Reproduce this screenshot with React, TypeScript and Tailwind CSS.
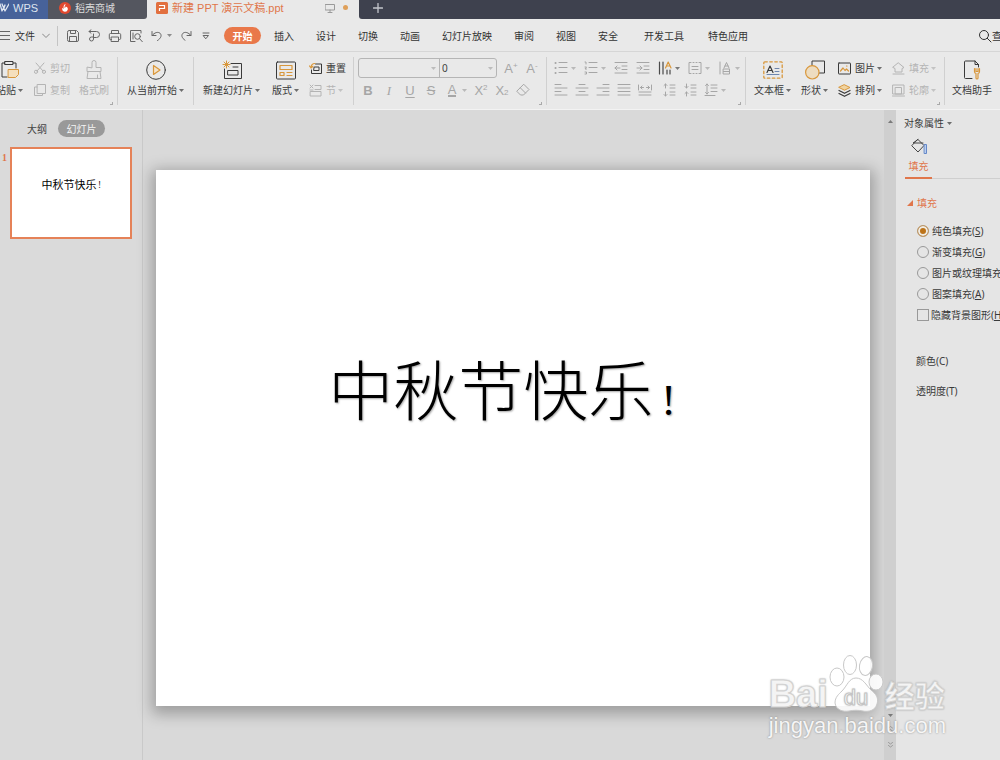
import { useState } from 'react';
import type { ReactNode } from 'react';

const MENU_TABS = ['插入', '设计', '切换', '动画', '幻灯片放映', '审阅', '视图', '安全'];
const EXTRA_TABS = ['开发工具', '特色应用'];

const FILL_OPTIONS = [
  { id: 'solid', label: '纯色填充', hotkey: 'S' },
  { id: 'gradient', label: '渐变填充', hotkey: 'G' },
  { id: 'picture', label: '图片或纹理填充', hotkey: 'P' },
  { id: 'pattern', label: '图案填充', hotkey: 'A' },
];

function Svg({ w = 14, h = 14, children }: { w?: number; h?: number; children: ReactNode }) {
  return (
    <svg
      width={w}
      height={h}
      viewBox={`0 0 ${w} ${h}`}
      fill="none"
      stroke="currentColor"
      strokeWidth="1"
      strokeLinecap="round"
      strokeLinejoin="round"
      className="shrink-0"
      aria-hidden="true"
    >
      {children}
    </svg>
  );
}

function Caret() {
  return (
    <svg width="5" height="3" viewBox="0 0 5 3" className="shrink-0 opacity-70" aria-hidden="true">
      <path d="M0 0h5L2.5 3z" fill="currentColor" />
    </svg>
  );
}

function Group({ className, corner, children }: { className: string; corner?: boolean; children: ReactNode }) {
  return (
    <div className={`relative flex shrink-0 border-r border-[#d0d0d0] ${className}`}>
      {children}
      {corner && (
        <span className="absolute right-1 bottom-0 size-[3px] border-r border-b border-[#aaa]" />
      )}
    </div>
  );
}

function BigButton({ icon, label, caret, disabled }: { icon: ReactNode; label: string; caret?: boolean; disabled?: boolean }) {
  return (
    <button
      type="button"
      disabled={disabled}
      className="flex shrink-0 flex-col items-center gap-[3px] self-start pt-[3px] text-[#3a3a3a] disabled:text-[#b4b4b4]"
    >
      {icon}
      <span className="flex items-center gap-[2px] leading-[14px]">
        {label}
        {caret && <Caret />}
      </span>
    </button>
  );
}

function RowButton({ icon, label, caret, disabled }: { icon: ReactNode; label: string; caret?: boolean; disabled?: boolean }) {
  return (
    <button
      type="button"
      disabled={disabled}
      className="flex h-[22px] items-center gap-1 text-[#3a3a3a] disabled:text-[#b4b4b4]"
    >
      {icon}
      <span className="flex items-center gap-[2px]">
        {label}
        {caret && <Caret />}
      </span>
    </button>
  );
}

function ToolButton({ name, caret, active, children }: { name: string; caret?: boolean; active?: boolean; children: ReactNode }) {
  return (
    <button
      type="button"
      aria-label={name}
      className={`flex h-[22px] items-center gap-[3px] ${active ? 'text-[#4a4a4a]' : 'text-[#a6a6a6]'}`}
    >
      <span className="flex w-[14px] justify-center text-[13px] leading-none">{children}</span>
      {caret && <Caret />}
    </button>
  );
}

// Letter with a small raised or lowered mark beside it
function MarkedLetter({ letter, mark, low }: { letter: string; mark: string; low?: boolean }) {
  return (
    <span className={`flex font-['Liberation_Sans'] ${low ? 'items-end' : 'items-start'}`}>
      {letter}
      <span className="text-[8px] leading-[8px]">{mark}</span>
    </span>
  );
}

function TitleBar() {
  return (
    <header className="flex h-[19px] overflow-hidden bg-[#e9e9e9] text-[10px]">
      <div className="flex shrink-0 overflow-hidden rounded-br-[3px]">
        <button type="button" className="flex w-12 items-center gap-1 bg-[#47629a] pb-1 text-[#dfe5f0]">
          <Svg w={9} h={9}>
            <path d="M0 1l2 7 3-6M2 1l3 7 4-7M5 2L4 5" strokeWidth="1.3" />
          </Svg>
          <span className="font-['Liberation_Sans'] text-[11px]">WPS</span>
        </button>
        <button type="button" className="flex w-[99px] items-center gap-1 bg-[#54565f] pb-1 pl-[11px] text-[#dcdcdc]">
          <svg width="12" height="12" viewBox="0 0 12 12" aria-hidden="true">
            <circle cx="6" cy="6" r="6" fill="#e2492f" />
            <path d="M6.3 1.8C7 3.5 5 4.2 5.6 6c.8-.3 1-.9 1-1.5C8.600 5 9 6.200 8.800 7.500a2.900 2.900 0 0 1-5.700-.5c0-.6.2-1 .4-1.300.3.800.8 1 1.200 1C4.100 4.500 5 3 6.300 1.800z" fill="#fff" />
          </svg>
          稻壳商城
        </button>
      </div>
      <div className="flex w-[212px] shrink-0 items-center gap-1 pb-1 pl-[9px] text-[#e0764b]">
        <svg width="12" height="12" viewBox="0 0 12 12" className="shrink-0" aria-hidden="true">
          <rect width="12" height="12" rx="1.500" fill="#e2703f" />
          <path d="M3 3.500h5.500v3H3.500v2.500" fill="none" stroke="#fff" strokeWidth="1.200" />
        </svg>
        <span className="font-['Liberation_Sans','Noto_Sans_CJK_SC',sans-serif] text-[11px] whitespace-nowrap">新建 PPT 演示文稿.ppt</span>
        <span className="ml-auto text-[#9a9a9a]">
          <Svg w={10} h={10}>
            <path d="M.5 1.500h9v5.500h-9zM5 7v2M3 9.500h4" />
          </Svg>
        </span>
        <span className="mr-[11px] ml-1 size-[5px] rounded-full bg-[#dfa05a]" />
      </div>
      <div className="flex flex-1 items-center rounded-bl-[3px] bg-[#3e414e] pb-1 pl-[14px]">
        <button type="button" aria-label="新建标签" className="text-[#c4c6cc]">
          <Svg w={10} h={10}>
            <path d="M5 .5v9M.5 5h9" strokeWidth="1.300" />
          </Svg>
        </button>
      </div>
    </header>
  );
}

function MenuBar() {
  return (
    <nav className="flex h-[33px] items-center overflow-hidden border-b border-[#d6d6d6] bg-[#e9e9e9] pt-px whitespace-nowrap text-[#333]">
      <button type="button" className="flex shrink-0 items-center gap-[5px]">
        <Svg w={10} h={9}>
          <path d="M0 .5h10M0 4.500h10M0 8.500h10" stroke="#666" />
        </Svg>
        文件
        <span className="ml-[2px] text-[#888]">
          <Svg w={8} h={6}>
            <path d="M.5 1L4 4.500 7.500 1" />
          </Svg>
        </span>
      </button>
      <span className="mr-2 ml-[7px] h-5 w-px shrink-0 bg-[#c4c4c4]" />
      <div className="flex shrink-0 items-center gap-[7px] text-[#666]">
        <button type="button" aria-label="保存">
          <Svg>
            <path d="M1.500 3a1.500 1.500 0 0 1 1.500-1.500h7.500l2 2V11a1.500 1.500 0 0 1-1.500 1.500H3A1.500 1.500 0 0 1 1.500 11zM4.500 1.500v3h5v-3M3.500 12.500v-5h7v5" />
          </Svg>
        </button>
        <button type="button" aria-label="输出为PDF">
          <Svg>
            <path d="M2 2.500h7.500a3 3 0 0 1 0 6H6.500M4 .8L2 2.500l2 1.700M6.500 5v5a2 2 0 1 1-2-2h2" />
          </Svg>
        </button>
        <button type="button" aria-label="打印">
          <Svg>
            <path d="M3.500 4.500v-3h7v3M3.500 10.500h-1a1.200 1.200 0 0 1-1.200-1.200V5.700a1.200 1.200 0 0 1 1.200-1.200h9a1.200 1.200 0 0 1 1.200 1.200v3.600a1.200 1.200 0 0 1-1.200 1.200h-1M3.500 8h7v4.500h-7z" />
          </Svg>
        </button>
        <button type="button" aria-label="打印预览">
          <Svg>
            <path d="M12 4V1.500H1.500v11H6M4 4v6" />
            <circle cx="8.500" cy="7.500" r="2.800" />
            <path d="M10.600 9.700l2.700 3" />
          </Svg>
        </button>
        <button type="button" aria-label="撤销" className="flex items-center gap-[3px]">
          <Svg>
            <path d="M2 2.500v4h4M2.200 6.300C4.500 3.500 8 2.500 10 4.200c2 1.800 1.300 5-2.500 7.300" />
          </Svg>
          <Caret />
        </button>
        <button type="button" aria-label="恢复">
          <Svg>
            <path d="M12 2.500v4H8M11.800 6.300C9.500 3.500 6 2.500 4 4.200c-2 1.800-1.300 5 2 7" />
          </Svg>
        </button>
        <button type="button" aria-label="更多" className="ml-[2px]">
          <Svg w={8} h={8}>
            <path d="M1 1h6M1.500 3.500h5L4 6.500z" />
          </Svg>
        </button>
      </div>
      <button type="button" className="mr-[13px] ml-[14px] h-[17px] w-[37px] shrink-0 rounded-full bg-[#e9784a] font-bold text-white">
        开始
      </button>
      <div className="flex shrink-0 gap-[22px]">
        {MENU_TABS.map((tab) => (
          <button type="button" key={tab}>{tab}</button>
        ))}
      </div>
      <div className="ml-[26px] flex shrink-0 gap-6">
        {EXTRA_TABS.map((tab) => (
          <button type="button" key={tab}>{tab}</button>
        ))}
      </div>
      <button type="button" className="ml-auto flex w-[22px] shrink-0 items-center overflow-hidden">
        <Svg>
          <circle cx="6" cy="6" r="4.500" />
          <path d="M9.300 9.300l3.700 3.700" />
        </Svg>
        查找
      </button>
    </nav>
  );
}

function Ribbon() {
  const amber = '#d8973c';

  return (
    <div className="flex h-[58px] overflow-hidden border-b border-[#f3f3f3] bg-[#e9e9e9] pt-[5px] pb-1 whitespace-nowrap">
      {/* Clipboard */}
      <Group className="-ml-1 pr-2" corner>
        <BigButton
          label="粘贴"
          caret
          icon={
            <Svg w={20} h={20}>
              <path d="M5 3H2v14h5M13 3h3v5M5 1.500h8v3H5z" />
              <path d="M8.500 9.500h10v5l-3 3h-7z" stroke={amber} fill="#f5dfbd" />
            </Svg>
          }
        />
        <div className="mr-[9px] ml-[11px]">
          <RowButton
            label="剪切"
            disabled
            icon={
              <Svg w={12} h={12}>
                <path d="M2 1l7 8M10 1L3 9" />
                <circle cx="2" cy="9.800" r="1.600" />
                <circle cx="10" cy="9.800" r="1.600" />
              </Svg>
            }
          />
          <RowButton
            label="复制"
            disabled
            icon={
              <Svg w={12} h={12}>
                <path d="M3.500.5h8v9h-8zM3 3H.5v8.500h8V10" />
              </Svg>
            }
          />
        </div>
        <BigButton
          label="格式刷"
          disabled
          icon={
            <Svg w={18} h={20}>
              <path d="M7 7.500v-5a2 2 0 0 1 4 0v5h5v4H2v-4zM3 11.500L2 18.500h14l-1-7M12.500 15v3.500" />
            </Svg>
          }
        />
      </Group>

      {/* Slide show */}
      <Group className="px-[9px]">
        <BigButton
          label="从当前开始"
          caret
          icon={
            <Svg w={20} h={20}>
              <circle cx="10" cy="10" r="9.300" />
              <path d="M7.500 5.500v9l6.500-4.500z" stroke={amber} fill="#f5e3c8" strokeWidth="1.200" />
            </Svg>
          }
        />
      </Group>

      {/* Slides */}
      <Group className="pr-[7px] pl-[9px]">
        <BigButton
          label="新建幻灯片"
          caret
          icon={
            <Svg w={20} h={20}>
              <path d="M9 3.500h10.500v15h-17V9M6 10.500h10v4.500H6zM11 7h5" />
              <path d="M4.500 1v7M1 4.500h7M2 2l5 5M7 2L2 7" stroke={amber} />
            </Svg>
          }
        />
        <div className="mr-[10px] ml-3 flex">
          <BigButton
            label="版式"
            caret
            icon={
              <Svg w={20} h={20}>
                <rect x=".5" y="2" width="19" height="17" rx="1" />
                <path d="M4 5.500h12v4H4zM4 12.500h4v3H4zM11 12.500h5M11 15.500h5" stroke={amber} strokeWidth="1.200" />
              </Svg>
            }
          />
        </div>
        <div>
          <RowButton
            label="重置"
            icon={
              <Svg w={13} h={13}>
                <path d="M6.500 2h6v9.500H2.500V8M5.500 5h4.500v3.500H5z" />
                <path d="M.5 4l1.500 2 2-1.700M2 6c0-3 1.500-4.500 4-4.500" stroke={amber} strokeWidth="1.200" />
              </Svg>
            }
          />
          <RowButton
            label="节"
            caret
            disabled
            icon={
              <Svg w={13} h={13}>
                <path d="M6 1.500h6v4H6M1 1l3 3M4 1L1 4M1.500 7.500h10.500v4.500H1.500zM1 6h3" />
              </Svg>
            }
          />
        </div>
      </Group>

      {/* Font */}
      <Group className="flex-col pr-[7px] pl-1" corner>
        <div className="flex h-[22px] items-center gap-[7px]">
          <div className="flex h-5 rounded-[3px] border border-[#b5b5b5] text-[#444]">
            <label className="relative flex items-center border-r border-[#b5b5b5]">
              <select aria-label="字体" className="h-full w-20 appearance-none outline-none">
                <option></option>
              </select>
              <span className="pointer-events-none absolute right-[3px] flex text-[#aaa]"><Caret /></span>
            </label>
            <label className="relative flex items-center">
              <select aria-label="字号" className="h-full w-14 appearance-none pl-[2px] outline-none" defaultValue="0">
                <option>0</option>
              </select>
              <span className="pointer-events-none absolute right-[3px] flex text-[#aaa]"><Caret /></span>
            </label>
          </div>
          <ToolButton name="增大字号"><MarkedLetter letter="A" mark="+" /></ToolButton>
          <ToolButton name="减小字号"><MarkedLetter letter="A" mark="-" /></ToolButton>
        </div>
        <div className="flex gap-[7px] pl-[3px] font-['Liberation_Sans']">
          <ToolButton name="加粗"><b>B</b></ToolButton>
          <ToolButton name="倾斜"><i className="font-['Liberation_Serif']">I</i></ToolButton>
          <ToolButton name="下划线"><span className="underline underline-offset-2">U</span></ToolButton>
          <ToolButton name="删除线"><span className="line-through">S</span></ToolButton>
          <ToolButton name="字体颜色" caret><span className="border-b-2 border-current leading-[11px]">A</span></ToolButton>
          <ToolButton name="上标"><MarkedLetter letter="X" mark="2" /></ToolButton>
          <ToolButton name="下标"><MarkedLetter letter="X" mark="2" low /></ToolButton>
          <ToolButton name="清除格式">
            <Svg>
              <path d="M8 1.500l5 5-5.500 5.500H4.500L1 8.500zM4.500 5l5 5" />
            </Svg>
          </ToolButton>
        </div>
      </Group>

      {/* Paragraph */}
      <Group className="flex-col pr-[5px] pl-[7px]" corner>
        <div className="flex gap-2">
          <ToolButton name="项目符号" caret>
            <Svg><path d="M1.500 2h.1M1.500 7h.1M1.500 12h.1" strokeWidth="2" /><path d="M5 1.500h8M5 6.500h8M5 11.500h8" /></Svg>
          </ToolButton>
          <ToolButton name="编号" caret>
            <Svg><path d="M1 1h1v2M1 6h1.500L1 8h1.500M1 11h1.500v2H1M5 1.500h8M5 6.500h8M5 11.500h8" /></Svg>
          </ToolButton>
          <ToolButton name="减少缩进量">
            <Svg><path d="M1 1.500h12M8 5h5M8 8.500h5M1 12h12M1 7h5M3 5L1 7l2 2" /></Svg>
          </ToolButton>
          <ToolButton name="增加缩进量">
            <Svg><path d="M1 1.500h12M8 5h5M8 8.500h5M1 12h12M1 7h5M4 5l2 2-2 2" /></Svg>
          </ToolButton>
          <ToolButton name="文字方向" caret active>
            <Svg>
              <path d="M1.500 1v12M5 1v12M9 9v4M12 9v4" strokeWidth="1.200" />
              <path d="M7.500 7l2.700-6L13 7M8.500 5h3.500" stroke={amber} strokeWidth="1.200" />
            </Svg>
          </ToolButton>
          <ToolButton name="对齐文本" caret>
            <Svg><path d="M3 1.500H1v11h2M11 1.500h2v11h-2M5 1.500h1M8 1.500h1M5 12.500h1M8 12.500h1M4 5.500h6M4 8.500h6" /></Svg>
          </ToolButton>
          <ToolButton name="分散对齐" caret>
            <Svg><path d="M2 1v12M6 7l2.500-5.500L11 7M7 5h3M5.500 8h6v5h-6zM5.500 10.500h6" /></Svg>
          </ToolButton>
        </div>
        <div className="flex gap-[10px]">
          <div className="flex gap-[7px]">
            <ToolButton name="左对齐"><Svg><path d="M1 1.500h6M1 5h12M1 8.500h6M1 12h12" /></Svg></ToolButton>
            <ToolButton name="居中"><Svg><path d="M4 1.500h6M1 5h12M4 8.500h6M1 12h12" /></Svg></ToolButton>
            <ToolButton name="右对齐"><Svg><path d="M7 1.500h6M1 5h12M7 8.500h6M1 12h12" /></Svg></ToolButton>
            <ToolButton name="两端对齐"><Svg><path d="M1 1.500h12M1 5h12M1 8.500h12M1 12h12" /></Svg></ToolButton>
            <ToolButton name="分散"><Svg><path d="M.5 2v5M13.500 2v5M2.500 4.500h3M8.500 4.500h3M4 3L2.500 4.500 4 6M10 3l1.500 1.500L10 6M1 9h12M1 12h12" /></Svg></ToolButton>
          </div>
          <div className="flex gap-[7px]">
            <ToolButton name="增大行距"><Svg><path d="M3.500 1v4M2 2.500L3.500 1 5 2.500M3.500 9v4M2 11.500L3.500 13 5 11.500M8 2h5M8 5h5M8 9h5M8 12h5" /></Svg></ToolButton>
            <ToolButton name="减小行距"><Svg><path d="M3.500 1v4M2 3.500L3.500 5 5 3.500M3.500 9v4M2 10.500L3.500 9 5 10.500M8 2h5M8 5h5M8 9h5M8 12h5" /></Svg></ToolButton>
            <ToolButton name="行距" caret><Svg><path d="M3 1v10M1.500 2.500L3 1l1.500 1.500M1.500 9.500L3 11l1.500-1.500M7 2h6M7 5h6M7 8.500h6M1 12.500h10" /></Svg></ToolButton>
          </div>
        </div>
      </Group>

      {/* Drawing */}
      <Group className="gap-[10px] px-2" corner>
        <BigButton
          label="文本框"
          caret
          icon={
            <Svg w={20} h={20}>
              <rect x=".8" y="1.800" width="18.400" height="16.400" rx="1" stroke={amber} strokeWidth="1.300" strokeDasharray="2.500 2.500" />
              <path d="M4 12.500L7 6l3 6.500M5 10.500h4" strokeWidth="1.200" />
              <path d="M12 8.500h4M12 11.500h4M4 14.500h12" stroke="#6f86ad" />
            </Svg>
          }
        />
        <BigButton
          label="形状"
          caret
          icon={
            <Svg w={20} h={20}>
              <path d="M7 5.500V1h12.500v12H14" />
              <circle cx="7.300" cy="12.300" r="6.700" stroke={amber} fill="#eddcc0" strokeWidth="1.200" />
            </Svg>
          }
        />
        <div>
          <RowButton
            label="图片"
            caret
            icon={
              <Svg w={13} h={13}>
                <rect x=".5" y="1" width="12" height="11" rx=".5" />
                <path d="M2.500 9l2.500-3 2 2.500L8.500 7l2 2M8.500 4h.5" stroke={amber} strokeWidth="1.200" />
              </Svg>
            }
          />
          <RowButton
            label="排列"
            caret
            icon={
              <Svg w={13} h={13}>
                <path d="M6.500.8L12 3.500 6.500 6.200 1 3.500z" stroke={amber} fill="#f0d3a0" />
                <path d="M1 6.500l5.500 2.800L12 6.500M1 9.500l5.500 2.800L12 9.500" strokeWidth="1.200" />
              </Svg>
            }
          />
        </div>
        <div>
          <RowButton
            label="填充"
            caret
            disabled
            icon={
              <Svg w={13} h={13}>
                <path d="M6.500 1l5.500 4.500-2 1v3.500H3V6.500L1 5.500zM1 12h11" />
              </Svg>
            }
          />
          <RowButton
            label="轮廓"
            caret
            disabled
            icon={
              <Svg w={13} h={13}>
                <path d="M1 1h11v9H1zM3.500 3.500h6v6.500h-6zM.5 12h12" />
              </Svg>
            }
          />
        </div>
      </Group>

      <div className="shrink-0 pl-[7px]">
        <BigButton
          label="文档助手"
          icon={
            <Svg w={20} h={20}>
              <path d="M10 18.500H3.500a1 1 0 0 1-1-1V2a1 1 0 0 1 1-1H13l3.500 3.500V7M13 1v3.500h3.500" />
              <path d="M12.500 8.500v3a2 2 0 0 0 1.500 2V18a1 1 0 0 0 2 0v-4.500a2 2 0 0 0 1.500-2v-3M14 8.500v3h2v-3" stroke={amber} strokeWidth="1.200" />
            </Svg>
          }
        />
      </div>
    </div>
  );
}

function SlideList() {
  return (
    <aside className="w-[143px] shrink-0 border-r border-[#c9c9c9] bg-[#dadada]">
      <div className="flex items-center gap-[11px] pt-[10px] pl-[27px]">
        <button type="button" className="text-[#444]">大纲</button>
        <button type="button" className="h-[17px] w-[47px] rounded-full bg-[#999] text-[#f4f4f4]">幻灯片</button>
      </div>
      <div className="mt-[10px] flex">
        <span className="w-[10px] pt-1 pl-[2px] font-['Liberation_Serif'] leading-[14px] font-bold text-[#e0764b]">1</span>
        <button
          type="button"
          className="flex h-[92px] w-[122px] items-start justify-center border-2 border-[#e58258] bg-white pt-7 text-[11px] leading-4 text-black"
        >
          中秋节快乐<span className="pl-[2px] text-[8px]">!</span>
        </button>
      </div>
    </aside>
  );
}

function Stage() {
  return (
    <section className="min-w-0 flex-1 bg-[#d9d9d9] pt-[60px] pr-[14px] pl-[13px]">
      <div className="flex aspect-[4/3] w-full justify-center bg-white pt-[172px] shadow-[0_4px_14px_4px_rgba(0,0,0,0.28)]">
        <h1 className="flex items-baseline text-[65px] leading-[96px] font-light text-black [text-shadow:1px_1px_2px_rgba(0,0,0,0.35)]">
          中秋节快乐
          <span className="pr-[22px] pl-2 font-['Liberation_Serif'] text-[44px]">!</span>
        </h1>
      </div>
    </section>
  );
}

function ScrollBar() {
  return (
    <div className="flex w-3 shrink-0 flex-col items-center bg-[#cfcfcf] pt-[10px] pb-3 text-[#555]">
      <button type="button" aria-label="向上滚动" className="flex rotate-180"><Caret /></button>
      <button type="button" aria-label="向下滚动" className="mt-auto flex"><Caret /></button>
      <button type="button" aria-label="上一张" className="mt-[9px] flex text-[#999]">
        <Svg w={5} h={6}><path d="M.5 2l2-1.500 2 1.500M.5 5l2-1.500 2 1.500" /></Svg>
      </button>
      <button type="button" aria-label="下一张" className="mt-[10px] flex text-[#999]">
        <Svg w={5} h={6}><path d="M.5.5l2 1.500 2-1.500M.5 3.500l2 1.500 2-1.500" /></Svg>
      </button>
    </div>
  );
}

function PropertiesPanel() {
  const [fill, setFill] = useState('solid');
  const [hideBackground, setHideBackground] = useState(false);

  return (
    <aside className="w-[104px] shrink-0 overflow-hidden bg-[#e5e5e5] whitespace-nowrap text-[#3a3a3a]">
      <button type="button" className="flex h-[26px] items-center gap-[3px] pl-2">
        对象属性
        <Caret />
      </button>
      <div className="ml-[9px] flex border-b border-[#cfcfcf]">
        <button type="button" className="-mb-px flex w-[27px] flex-col items-center border-b-2 border-[#e0764b] pt-[2px] pb-1 text-[#e0764b]">
          <span className="text-[#444]">
            <Svg w={18} h={18}>
              <path d="M8 1.500l6 6-6 6.500L2 8zM8 1.500L3 5h10" />
              <path d="M14.500 6.500h2v9h-2z" stroke="#6488c8" fill="#b9cdf0" />
            </Svg>
          </span>
          <span className="mt-[3px] leading-[14px]">填充</span>
        </button>
      </div>
      <button type="button" className="mt-4 flex h-4 items-center gap-1 pl-[11px] text-[#e0764b]">
        <svg width="6" height="6" viewBox="0 0 6 6" aria-hidden="true">
          <path d="M6 0v6H0z" fill="currentColor" />
        </svg>
        填充
      </button>
      <div className="mt-[9px] pl-[21px]">
        {FILL_OPTIONS.map((option) => (
          <label key={option.id} className="flex h-[21px] items-center gap-[3px]">
            <input
              type="radio"
              name="fill"
              value={option.id}
              checked={fill === option.id}
              onChange={() => setFill(option.id)}
              className="size-3 shrink-0 appearance-none rounded-full border border-[#999] checked:border-[#b99a72] checked:bg-[#bd7318] checked:shadow-[inset_0_0_0_2px_#f0ece4]"
            />
            <span>{option.label}(<u>{option.hotkey}</u>)</span>
          </label>
        ))}
        <label className="flex h-[21px] items-center gap-[2px]">
          <input
            type="checkbox"
            checked={hideBackground}
            onChange={(e) => setHideBackground(e.target.checked)}
            className="size-3 shrink-0 appearance-none border border-[#999] checked:bg-[#bd7318]"
          />
          <span>隐藏背景图形(<u>H</u>)</span>
        </label>
      </div>
      <div className="mt-[21px] pl-5 leading-[30px]">
        <p>颜色(C)</p>
        <p>透明度(T)</p>
      </div>
    </aside>
  );
}

function Watermark() {
  return (
    <div className="pointer-events-none absolute right-[54px] bottom-5 font-['Liberation_Sans'] text-white/90 [text-shadow:0_0_2px_rgba(110,110,110,0.8)]">
      <div className="flex h-[58px] items-end">
        <span className="text-[38px] leading-[36px] font-bold [-webkit-text-stroke:1px_#d2d2d2]">Bai</span>
        <span className="relative">
          <svg width="56" height="58" viewBox="0 0 56 58" fill="#fff" fillOpacity=".9" stroke="#c8c8c8" strokeWidth="1" aria-hidden="true">
            <ellipse cx="9" cy="23" rx="7" ry="9" />
            <ellipse cx="22" cy="11" rx="6.500" ry="9.500" />
            <ellipse cx="38" cy="12" rx="6.500" ry="9.500" transform="rotate(10 38 12)" />
            <ellipse cx="48" cy="28" rx="7" ry="8" />
            <path d="M28 24c7 0 10 7 15 12 5 4 8 8 6 14-2 7-9 8-14 7-5-1-9-1-14 0-6 1-13-1-14-8 0-6 4-9 7-12 5-5 7-13 14-13z" />
          </svg>
          <span className="absolute bottom-[2px] left-4 text-[22px] leading-[24px] text-white [-webkit-text-stroke:1px_#c4c4c4]">du</span>
        </span>
        <span className="ml-px font-['Noto_Sans_CJK_SC'] text-[30px] leading-[36px] font-bold [-webkit-text-stroke:1px_#d2d2d2]">经验</span>
      </div>
      <p className="text-[22px] leading-7">jingyan.baidu.com</p>
    </div>
  );
}

export default function App() {
  return (
    <div className="relative flex min-h-screen flex-col overflow-hidden font-['Noto_Sans','Noto_Sans_CJK_SC',sans-serif] text-[10px] leading-[14px]">
      <TitleBar />
      <MenuBar />
      <Ribbon />
      <main className="flex flex-1">
        <SlideList />
        <Stage />
        <ScrollBar />
        <PropertiesPanel />
      </main>
      <Watermark />
    </div>
  );
}
